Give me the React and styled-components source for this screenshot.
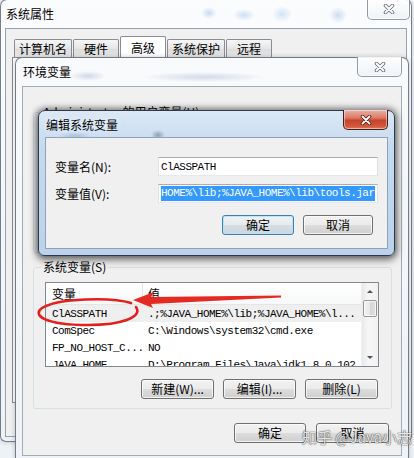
import React from 'react';
import styled, { createGlobalStyle } from 'styled-components';

const UI_FONT = `"Noto Sans CJK SC", "Noto Sans", "DejaVu Sans", sans-serif`;
const MONO_FONT = `"Liberation Mono", "DejaVu Sans Mono", "Noto Sans CJK SC", monospace`;

const GlobalStyle = createGlobalStyle`
  html, body {
    margin: 0;
    padding: 0;
  }
  body {
    font-family: ${UI_FONT};
    font-size: 12px;
    color: #000;
  }
  * {
    box-sizing: border-box;
  }
`;

const Desktop = styled.div`
  position: relative;
  width: 414px;
  height: 458px;
  overflow: hidden;
  background: linear-gradient(180deg, #f5f8fb, #edf2f7);
`;

const Window = styled.div`
  position: absolute;
  left: ${(p) => p.$x}px;
  top: ${(p) => p.$y}px;
  width: ${(p) => p.$w}px;
  height: ${(p) => p.$h}px;
  display: flex;
  flex-direction: column;
  border: 1px solid ${(p) => (p.$active ? '#2c3a4c' : 'rgba(60, 72, 88, 0.7)')};
  border-radius: 7px 7px 6px 6px;
  background: ${(p) => p.$glass};
  box-shadow: ${(p) =>
    p.$active
      ? '0 0 6px 2px rgba(0, 0, 0, 0.45), 0 4px 10px rgba(0, 0, 0, 0.35)'
      : '0 0 5px rgba(0, 0, 0, 0.22)'};
`;

const TitleBar = styled.div`
  display: flex;
  justify-content: space-between;
  align-items: flex-start;
  height: ${(p) => p.$h}px;
  padding-left: ${(p) => p.$pl}px;
  flex: none;
`;

const Title = styled.span`
  padding: 6px 0 0 1px;
  line-height: 16px;
  font-size: 12px;
  color: #000;
  text-shadow: 0 0 6px rgba(255, 255, 255, 0.9);
`;

const CloseButton = styled.div`
  display: flex;
  align-items: center;
  justify-content: center;
  width: ${(p) => p.$w}px;
  height: ${(p) => p.$h}px;
  margin: -1px ${(p) => p.$mr}px 0 0;
  border: 1px solid ${(p) => (p.$active ? '#4a1c15' : 'rgba(80, 90, 105, 0.6)')};
  border-top: none;
  border-radius: 0 0 5px 5px;
  background: ${(p) =>
    p.$active
      ? 'linear-gradient(180deg, #e9b1a4 0%, #dc7d69 40%, #c8432c 55%, #d0573c 85%, #e07b5c 100%)'
      : 'linear-gradient(180deg, rgba(255,255,255,0.85), rgba(235,239,244,0.75))'};
  box-shadow: inset 0 0 0 1px rgba(255, 255, 255, 0.45);
`;

const Client = styled.div`
  flex: 1;
  display: flex;
  flex-direction: column;
  margin: 0 ${(p) => p.$m}px ${(p) => p.$m}px ${(p) => p.$ml ?? p.$m}px;
  padding: ${(p) => p.$pad};
  background: #f0f0f0;
  border: 1px solid ${(p) => p.$edge};
  min-height: 0;
`;

/* ---------- tabs (系统属性) ---------- */

const TabRow = styled.div`
  display: flex;
  align-items: flex-end;
  gap: 1px;
  height: 21px;
  margin: 7px 0 0 8px;
`;

const Tab = styled.div`
  min-width: 46px;
  height: ${(p) => (p.$active ? 21 : 18)}px;
  padding: ${(p) => (p.$active ? '1px' : '0')} 4px 0;
  display: flex;
  align-items: center;
  justify-content: center;
  border: 1px solid #898c95;
  border-bottom: none;
  border-radius: 2px 2px 0 0;
  background: ${(p) =>
    p.$active ? '#ffffff' : 'linear-gradient(180deg, #f6f6f6, #e6e6e6 50%, #dcdcdc 51%, #e9e9e9)'};
  font-size: 12px;
  line-height: 16px;
`;

const TabPanel = styled.div`
  flex: 1;
  margin: 0 4px 33px 6px;
  border: 1px solid #898c95;
  background: #ffffff;
`;

/* ---------- group boxes, list, buttons ---------- */

const Group = styled.fieldset`
  margin: ${(p) => p.$mt}px 0 0;
  padding: 7px 12px 9px 11px;
  min-inline-size: 0;
  height: ${(p) => (p.$h ? `${p.$h}px` : 'auto')};
  border: 1px solid #d5dfe5;
  border-radius: 3px;
  display: flex;
  flex-direction: column;
`;

const Legend = styled.legend`
  margin-left: -4px;
  padding: 0 2px;
  font-size: 12px;
  line-height: 16px;
  color: #000;
`;

const ListView = styled.div`
  display: flex;
  height: 85px;
  border: 1px solid #828790;
  background: #ffffff;
  overflow: hidden;
`;

const ListBody = styled.div`
  flex: 1;
  overflow: hidden;
`;

const ListHeader = styled.div`
  display: grid;
  grid-template-columns: 97px 1fr;
  height: 22px;
  background: linear-gradient(180deg, #ffffff, #f7f8f9);
  border-bottom: 1px solid #e5e5e5;
`;

const HeaderCell = styled.div`
  display: flex;
  align-items: center;
  padding-left: ${(p) => (p.$first ? 6 : 5)}px;
  border-right: ${(p) => (p.$first ? '1px solid #e5e5e5' : 'none')};
  font-size: 12px;
`;

const ListRow = styled.div`
  display: grid;
  grid-template-columns: 97px 1fr;
  height: 17px;
  align-items: center;
  background: ${(p) => (p.$selected ? '#efefef' : 'transparent')};
  font-family: ${MONO_FONT};
  font-size: 11px;
  letter-spacing: -0.5px;
  white-space: nowrap;
`;

const Cell = styled.span`
  padding-left: ${(p) => (p.$first ? 6 : 5)}px;
  overflow: hidden;
`;

const ScrollBar = styled.div`
  width: 17px;
  display: flex;
  flex-direction: column;
  background: linear-gradient(90deg, #e9e9e9, #f6f6f6 40%, #f1f1f1);
  border-left: 1px solid #f0f0f0;
`;

const ScrollArrow = styled.div`
  height: 17px;
  display: flex;
  align-items: center;
  justify-content: center;
  &::after {
    content: '';
    border-left: 3px solid transparent;
    border-right: 3px solid transparent;
    ${(p) => (p.$down ? 'border-top: 3px solid #505050;' : 'border-bottom: 3px solid #505050;')}
  }
`;

const ScrollThumb = styled.div`
  height: 17px;
  margin: 0 1px;
  border: 1px solid #979797;
  border-radius: 2px;
  background: linear-gradient(90deg, #f2f2f2, #e8e8e8 50%, #d6d6d6 51%, #dedede);
  box-shadow: inset 0 0 0 1px rgba(255, 255, 255, 0.7);
`;

const ScrollTrack = styled.div`
  flex: 1;
`;

const ButtonRow = styled.div`
  display: flex;
  justify-content: flex-end;
  gap: ${(p) => p.$gap}px;
  margin: ${(p) => p.$mt}px ${(p) => p.$mr}px 0 0;
`;

const Button = styled.div`
  width: ${(p) => p.$w}px;
  height: 20px;
  display: flex;
  align-items: center;
  justify-content: center;
  border: 1px solid ${(p) => (p.$default ? '#3c7fb1' : '#707070')};
  border-radius: 3px;
  background: ${(p) =>
    p.$default
      ? 'linear-gradient(180deg, #eff3f6 0%, #e5eaee 50%, #d6dee4 51%, #cdd6dd 100%)'
      : 'linear-gradient(180deg, #f2f2f2 0%, #ebebeb 50%, #dddddd 51%, #cfcfcf 100%)'};
  box-shadow: inset 0 0 0 1px ${(p) => (p.$default ? 'rgba(186, 226, 248, 0.9)' : 'rgba(255, 255, 255, 0.7)')};
  font-size: 12px;
  line-height: 16px;
  white-space: nowrap;
`;

/* ---------- edit dialog fields ---------- */

const FieldRow = styled.div`
  display: flex;
  align-items: center;
  margin-top: ${(p) => p.$mt}px;
`;

const FieldLabel = styled.span`
  width: 103px;
  flex: none;
  font-size: 12px;
  line-height: 16px;
`;

const TextBox = styled.div`
  flex: 1;
  height: 19px;
  display: flex;
  align-items: center;
  padding-left: 2px;
  background: #ffffff;
  border: 1px solid #abadb3;
  border-color: #abadb3 #dbdfe6 #e3e9ef #e2e3ea;
  font-family: ${MONO_FONT};
  font-size: 11px;
  letter-spacing: -0.5px;
  white-space: nowrap;
  overflow: hidden;
`;

const Selection = styled.span`
  background: #3399ff;
  color: #ffffff;
  line-height: 15px;
`;

/* ---------- overlays ---------- */

const Annotation = styled.svg`
  position: absolute;
  left: 0;
  top: 0;
  pointer-events: none;
`;

const Watermark = styled.div`
  position: absolute;
  left: 302px;
  top: 428px;
  font-size: 15px;
  line-height: 18px;
  color: rgba(255, 255, 255, 0.9);
  text-shadow: 0 0 1px rgba(0, 0, 0, 0.7), 0 0 1px rgba(0, 0, 0, 0.5), 0 0 3px rgba(0, 0, 0, 0.2);
  white-space: nowrap;
`;

function CloseGlyph({ active }) {
  return (
    <svg width="14" height="10" viewBox="0 0 14 10">
      <path d="M3.5 1.5 L10.5 8.5 M10.5 1.5 L3.5 8.5" stroke={active ? '#5b1c12' : '#6a7078'} strokeWidth="3.6" strokeLinecap="round" />
      <path d="M3.5 1.5 L10.5 8.5 M10.5 1.5 L3.5 8.5" stroke="#ffffff" strokeWidth="1.9" strokeLinecap="round" />
    </svg>
  );
}

const glassBack = [
  'radial-gradient(ellipse 8px 6px at 208px 13px, rgba(120, 170, 225, 0.4), transparent)',
  'radial-gradient(ellipse 11px 6px at 243px 15px, rgba(120, 170, 225, 0.35), transparent)',
  'radial-gradient(ellipse 10px 8px at 281px 14px, rgba(130, 180, 230, 0.35), transparent)',
  'radial-gradient(ellipse 9px 8px at 337px 15px, rgba(120, 160, 215, 0.35), transparent)',
  'linear-gradient(180deg, #fbfcfe, #eef2f7)',
].join(', ');

const glassMiddle = [
  'radial-gradient(ellipse 18px 5px at 72px 18px, rgba(110, 140, 185, 0.3), transparent)',
  'radial-gradient(ellipse 62px 5px at 188px 19px, rgba(110, 140, 185, 0.28), transparent)',
  'linear-gradient(180deg, #f9fafc, #eff2f6)',
].join(', ');

const glassActive = [
  'radial-gradient(ellipse 7px 5px at 119px 24px, rgba(60, 80, 110, 0.45), transparent)',
  'radial-gradient(ellipse 16px 4px at 36px 25px, rgba(90, 120, 160, 0.3), transparent)',
  'linear-gradient(180deg, #dbe8f5 0%, #c6daef 25%, #bbd2ea 100%)',
].join(', ');

const tabs = ['计算机名', '硬件', '高级', '系统保护', '远程'];

const envRows = [
  { name: 'ClASSPATH', value: '.;%JAVA_HOME%\\lib;%JAVA_HOME%\\l...', selected: true },
  { name: 'ComSpec', value: 'C:\\Windows\\system32\\cmd.exe' },
  { name: 'FP_NO_HOST_C...', value: 'NO' },
  { name: 'JAVA_HOME', value: 'D:\\Program Files\\Java\\jdk1.8.0_102' },
];

export default function App() {
  return (
    <Desktop>
      <GlobalStyle />

      <Window $x={0} $y={-1} $w={412} $h={443} $glass={glassBack}>
        <TitleBar $h={28} $pl={4}>
          <Title>系统属性</Title>
          <CloseButton $w={43} $h={21} $mr={1}>
            <CloseGlyph />
          </CloseButton>
        </TitleBar>
        <Client $m={4} $ml={4} $pad="0" $edge="#97a1ad">
          <TabRow>
            {tabs.map((t) => (
              <Tab key={t} $active={t === '高级'}>
                {t}
              </Tab>
            ))}
          </TabRow>
          <TabPanel />
        </Client>
      </Window>

      <Window $x={15} $y={57} $w={394} $h={406} $glass={glassMiddle}>
        <TitleBar $h={28} $pl={6}>
          <Title>环境变量</Title>
          <CloseButton $w={45} $h={20} $mr={6}>
            <CloseGlyph />
          </CloseButton>
        </TitleBar>
        <Client $m={6} $pad="0 9px 0 10px" $edge="#a3abb5">
          <Group $mt={17} $h={149}>
            <Legend>Administrator 的用户变量(U)</Legend>
          </Group>
          <Group $mt={6}>
            <Legend>系统变量(S)</Legend>
            <ListView>
              <ListBody>
                <ListHeader>
                  <HeaderCell $first>变量</HeaderCell>
                  <HeaderCell>值</HeaderCell>
                </ListHeader>
                {envRows.map((r) => (
                  <ListRow key={r.name} $selected={r.selected}>
                    <Cell $first>{r.name}</Cell>
                    <Cell>{r.value}</Cell>
                  </ListRow>
                ))}
              </ListBody>
              <ScrollBar>
                <ScrollArrow />
                <ScrollThumb />
                <ScrollTrack />
                <ScrollArrow $down />
              </ScrollBar>
            </ListView>
            <ButtonRow $gap={9} $mt={12} $mr={1}>
              <Button $w={73}>新建(W)...</Button>
              <Button $w={73}>编辑(I)...</Button>
              <Button $w={73}>删除(L)</Button>
            </ButtonRow>
          </Group>
          <ButtonRow $gap={10} $mt={14} $mr={3}>
            <Button $w={72}>确定</Button>
            <Button $w={73}>取消</Button>
          </ButtonRow>
        </Client>
      </Window>

      <Window $x={38} $y={110} $w={357} $h={146} $glass={glassActive} $active>
        <TitleBar $h={26} $pl={6}>
          <Title>编辑系统变量</Title>
          <CloseButton $w={45} $h={20} $mr={6} $active>
            <CloseGlyph active />
          </CloseButton>
        </TitleBar>
        <Client $m={6} $pad="19px 9px 11px 9px" $edge="#8ea3bb">
          <FieldRow $mt={0}>
            <FieldLabel>变量名(N):</FieldLabel>
            <TextBox>ClASSPATH</TextBox>
          </FieldRow>
          <FieldRow $mt={8}>
            <FieldLabel>变量值(V):</FieldLabel>
            <TextBox>
              <Selection>HOME%\lib;%JAVA_HOME%\lib\tools.jar</Selection>
            </TextBox>
          </FieldRow>
          <ButtonRow $gap={9} $mt={12} $mr={5}>
            <Button $w={72} $default>
              确定
            </Button>
            <Button $w={70}>取消</Button>
          </ButtonRow>
        </Client>
      </Window>

      <Annotation width="414" height="458" viewBox="0 0 414 458">
        <path
          d="M131 303 C112 297 58 298 42 308 C32 315 44 325 88 325 C122 325 143 317 136 307"
          fill="none"
          stroke="#e3201b"
          strokeWidth="2.6"
          strokeLinecap="round"
        />
        <polygon points="133,300 154,292 151,297 281,295.5 281,297.5 151,304 153,308" fill="#e42a22" />
      </Annotation>

      <Watermark>知乎 @Java小志</Watermark>
    </Desktop>
  );
}
